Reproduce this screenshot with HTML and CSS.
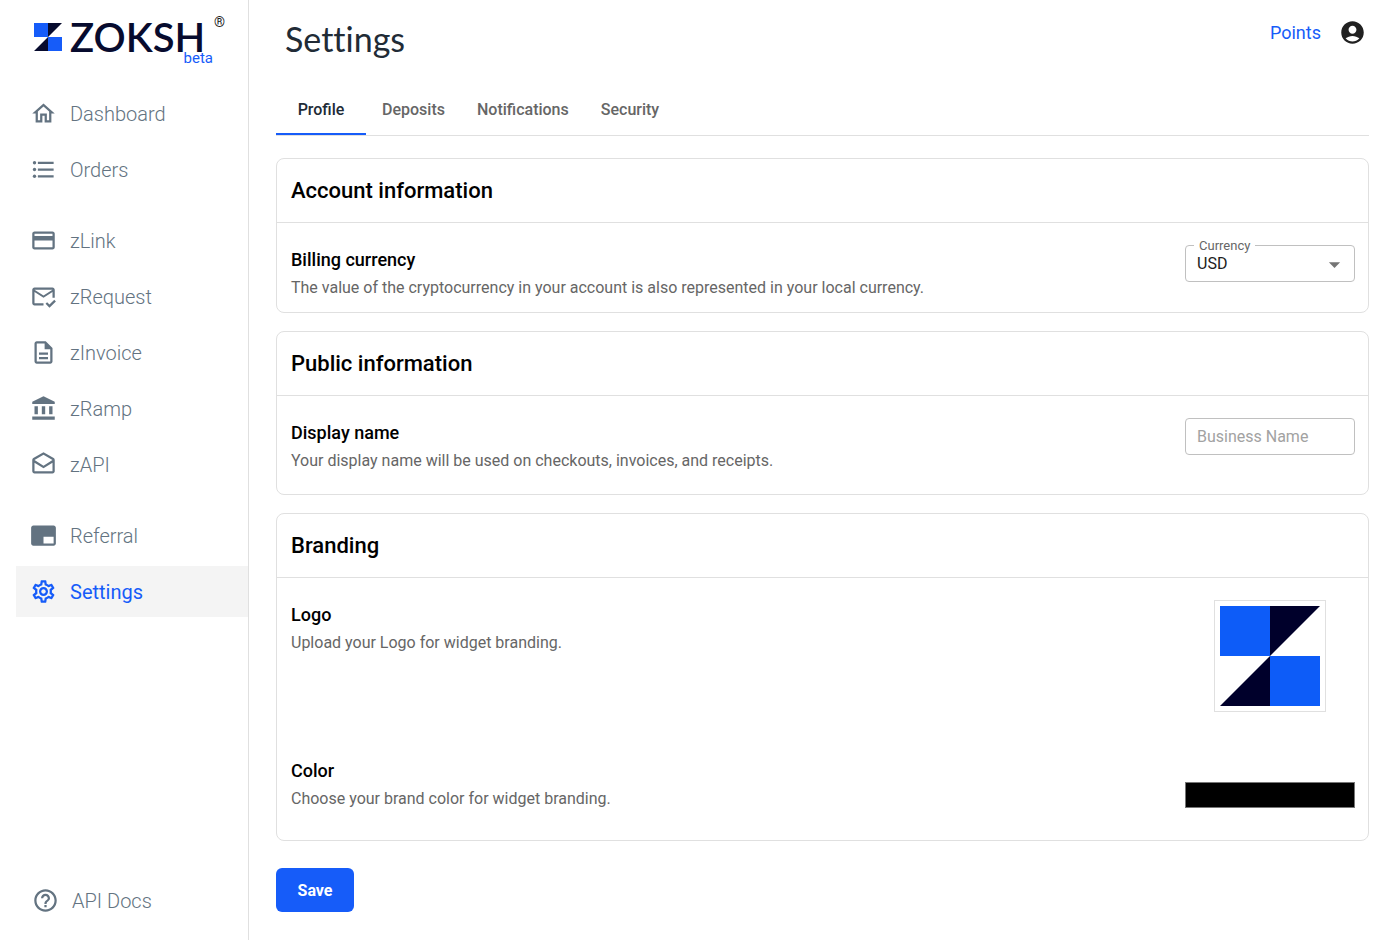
FILE: index.html
```html
<!DOCTYPE html>
<html lang="en">
<head>
<meta charset="utf-8">
<title>Zoksh Settings</title>
<link rel="stylesheet" href="styles.css">
</head>
<body>
<div class="app">
  <aside class="sidebar">
    <a class="brand" href="#">
      <svg class="brand-mark" viewBox="0 0 28 28" aria-hidden="true"><path fill="#165cf9" d="M0 0h14v14H0zM14 14h14v14H14z"/><path fill="#070b2e" d="M14 0h14L14 14zM14 28H0l14-14z"/></svg>
      <span class="brand-name">ZOKSH</span>
      <span class="brand-reg">®</span>
      <span class="brand-tag">beta</span>
    </a>
    <nav class="nav" aria-label="Main">
      <ul class="nav-group">
        <li><a class="nav-link" href="#"><svg class="icon" viewBox="0 0 24 24"><path d="M12 5.69l5 4.5V18h-2v-6H9v6H7v-7.81l5-4.5M12 3L2 12h3v8h6v-6h2v6h6v-8h3L12 3z"/></svg>Dashboard</a></li>
        <li><a class="nav-link" href="#"><svg class="icon" viewBox="0 0 24 24"><circle cx="4" cy="6" r="1.5"/><circle cx="4" cy="12" r="1.5"/><circle cx="4" cy="18" r="1.5"/><path d="M7 5h14v2H7zM7 11h14v2H7zM7 17h14v2H7z"/></svg>Orders</a></li>
      </ul>
      <ul class="nav-group">
        <li><a class="nav-link" href="#"><svg class="icon" viewBox="0 0 24 24"><path d="M20 4H4c-1.11 0-1.99.89-1.99 2L2 18c0 1.11.89 2 2 2h16c1.11 0 2-.89 2-2V6c0-1.11-.89-2-2-2zm0 14H4v-6h16v6zm0-10H4V6h16v2z"/></svg>zLink</a></li>
        <li><a class="nav-link" href="#"><svg class="icon" viewBox="0 0 24 24"><path d="M12 18H4V8l8 5 8-5v5h2V6c0-1.1-.9-2-2-2H4c-1.1 0-2 .9-2 2v12c0 1.1.9 2 2 2h8v-2zm8-12l-8 5-8-5h16zm-2.66 16l-3.54-3.54 1.41-1.41 2.12 2.12 4.24-4.24L23 16.34 17.34 22z"/></svg>zRequest</a></li>
        <li><a class="nav-link" href="#"><svg class="icon" viewBox="0 0 24 24"><path d="M8 16h8v2H8zm0-4h8v2H8zm6-10H6c-1.1 0-2 .9-2 2v16c0 1.1.89 2 1.99 2H18c1.1 0 2-.9 2-2V8l-6-6zm4 18H6V4h7v5h5v11z"/></svg>zInvoice</a></li>
        <li><a class="nav-link" href="#"><svg class="icon" viewBox="0 0 24 24"><path d="M4 10h3v7H4zM10.5 10h3v7h-3zM2 19h20v3H2zM17 10h3v7h-3zM12 1L2 6v2h20V6z"/></svg>zRamp</a></li>
        <li><a class="nav-link" href="#"><svg class="icon" viewBox="0 0 24 24"><path d="M21.99 8c0-.72-.37-1.35-.94-1.7L12 1 2.95 6.3C2.38 6.65 2 7.28 2 8v10c0 1.1.9 2 2 2h16c1.1 0 2-.9 2-2l-.01-10zm-2 0v.01L12 13 4 8l8-4.68L19.99 8zM4 18v-7.66l8 5.02 7.99-4.99L20 18H4z"/></svg>zAPI</a></li>
      </ul>
      <ul class="nav-group">
        <li><a class="nav-link" href="#"><svg class="icon" viewBox="0 0 24 24"><path d="M21 3H3c-1.1 0-2 .9-2 2v14c0 1.1.9 2 2 2h18c1.1 0 2-.9 2-2V5c0-1.1-.9-2-2-2zm0 16h-9v-6h9v6z"/></svg>Referral</a></li>
        <li><a class="nav-link nav-link-active" href="#" aria-current="page"><svg class="icon" viewBox="0 0 24 24"><path d="M19.43 12.98c.04-.32.07-.64.07-.98 0-.34-.03-.66-.07-.98l2.11-1.65c.19-.15.24-.42.12-.64l-2-3.46c-.09-.16-.26-.25-.44-.25-.06 0-.12.01-.17.03l-2.49 1c-.52-.4-1.08-.73-1.69-.98l-.38-2.65C14.46 2.18 14.25 2 14 2h-4c-.25 0-.46.18-.49.42l-.38 2.65c-.61.25-1.17.59-1.69.98l-2.49-1c-.06-.02-.12-.03-.18-.03-.17 0-.34.09-.43.25l-2 3.46c-.13.22-.07.49.12.64l2.11 1.65c-.04.32-.07.65-.07.98 0 .33.03.66.07.98l-2.11 1.65c-.19.15-.24.42-.12.64l2 3.46c.09.16.26.25.44.25.06 0 .12-.01.17-.03l2.49-1c.52.4 1.08.73 1.69.98l.38 2.65c.03.24.24.42.49.42h4c.25 0 .46-.18.49-.42l.38-2.65c.61-.25 1.17-.59 1.69-.98l2.49 1c.06.02.12.03.18.03.17 0 .34-.09.43-.25l2-3.46c.12-.22.07-.49-.12-.64l-2.11-1.65zm-1.98-1.71c.04.31.05.52.05.73 0 .21-.02.43-.05.73l-.14 1.13.89.7 1.08.84-.7 1.21-1.27-.51-1.04-.42-.9.68c-.43.32-.84.56-1.25.73l-1.06.43-.16 1.13-.2 1.35h-1.4l-.19-1.35-.16-1.13-1.06-.43c-.43-.18-.83-.41-1.23-.71l-.91-.7-1.06.43-1.27.51-.7-1.21 1.08-.84.89-.7-.14-1.13c-.03-.31-.05-.54-.05-.74s.02-.43.05-.73l.14-1.13-.89-.7-1.08-.84.7-1.21 1.27.51 1.04.42.9-.68c.43-.32.84-.56 1.25-.73l1.06-.43.16-1.13.2-1.35h1.39l.19 1.35.16 1.13 1.06.43c.43.18.83.41 1.23.71l.91.7 1.06-.43 1.27-.51.7 1.21-1.07.85-.89.7.14 1.13zM12 8c-2.21 0-4 1.79-4 4s1.79 4 4 4 4-1.79 4-4-1.79-4-4-4zm0 6c-1.1 0-2-.9-2-2s.9-2 2-2 2 .9 2 2-.9 2-2 2z"/></svg>Settings</a></li>
      </ul>
    </nav>
    <a class="nav-link nav-link-docs" href="#"><svg class="icon" viewBox="0 0 24 24"><path d="M11 18h2v-2h-2v2zm1-16C6.48 2 2 6.48 2 12s4.48 10 10 10 10-4.48 10-10S17.52 2 12 2zm0 18c-4.41 0-8-3.59-8-8s3.59-8 8-8 8 3.59 8 8-3.59 8-8 8zm0-14c-2.21 0-4 1.79-4 4h2c0-1.1.9-2 2-2s2 .9 2 2c0 2-3 1.75-3 5h2c0-2.25 3-2.5 3-5 0-2.21-1.79-4-4-4z"/></svg>API Docs</a>
  </aside>

  <main class="main">
    <header class="topbar">
      <h1 class="page-title">Settings</h1>
      <div class="topbar-actions">
        <a class="points" href="#">Points</a>
        <button class="account" type="button" aria-label="Account"><svg class="icon" viewBox="0 0 24 24"><path d="M12 2C6.48 2 2 6.48 2 12s4.48 10 10 10 10-4.48 10-10S17.52 2 12 2zm0 4c1.93 0 3.5 1.57 3.5 3.5S13.93 13 12 13s-3.5-1.57-3.5-3.5S10.07 6 12 6zm0 14c-2.03 0-4.43-.82-6.14-2.88C7.55 15.8 9.68 15 12 15s4.45.8 6.14 2.12C16.43 19.18 14.03 20 12 20z"/></svg></button>
      </div>
    </header>

    <div class="tabs" role="tablist">
      <button class="tab tab-active" type="button" role="tab" aria-selected="true">Profile</button>
      <button class="tab" type="button" role="tab" aria-selected="false">Deposits</button>
      <button class="tab" type="button" role="tab" aria-selected="false">Notifications</button>
      <button class="tab" type="button" role="tab" aria-selected="false">Security</button>
    </div>

    <form class="form">
      <section class="card">
        <h2 class="card-title">Account information</h2>
        <div class="row row-compact">
          <div class="row-text">
            <h3 class="row-title">Billing currency</h3>
            <p class="row-desc">The value of the cryptocurrency in your account is also represented in your local currency.</p>
          </div>
          <div class="control select-field">
            <label class="select-label" for="currency">Currency</label>
            <select class="field select" id="currency"><option>USD</option></select>
            <svg class="select-arrow" viewBox="0 0 24 24" aria-hidden="true"><path d="M7 10l5 5 5-5z"/></svg>
          </div>
        </div>
      </section>

      <section class="card">
        <h2 class="card-title">Public information</h2>
        <div class="row">
          <div class="row-text">
            <h3 class="row-title"><label for="display-name">Display name</label></h3>
            <p class="row-desc">Your display name will be used on checkouts, invoices, and receipts.</p>
          </div>
          <div class="control">
            <input class="field" id="display-name" type="text" placeholder="Business Name">
          </div>
        </div>
      </section>

      <section class="card">
        <h2 class="card-title">Branding</h2>
        <div class="row row-logo">
          <div class="row-text">
            <h3 class="row-title">Logo</h3>
            <p class="row-desc">Upload your Logo for widget branding.</p>
          </div>
          <div class="control control-center">
            <button class="logo-upload" type="button" aria-label="Upload logo">
              <svg class="logo-image" viewBox="0 0 100 100"><path fill="#00002b" d="M50 0h50L50 50zM50 100H0l50-50z"/><path fill="#0d5cf8" d="M0 0h50v50H0zM50 50h50v50H50z"/></svg>
            </button>
          </div>
        </div>
        <div class="row row-color">
          <div class="row-text">
            <h3 class="row-title"><label for="brand-color">Color</label></h3>
            <p class="row-desc">Choose your brand color for widget branding.</p>
          </div>
          <div class="control">
            <input class="color-input" id="brand-color" type="color" value="#000000">
          </div>
        </div>
      </section>

      <button class="save" type="submit">Save</button>
    </form>
  </main>
</div>
</body>
</html>
```

FILE: styles.css
```css
* {
  box-sizing: border-box;
}

body {
  margin: 0;
  background: #fff;
  color: #000;
  font-family: Roboto, sans-serif;
  font-size: 16px;
}

h1, h2, h3, p, ul {
  margin: 0;
  padding: 0;
}

button, input, select {
  font: inherit;
}

a {
  text-decoration: none;
}

.app {
  display: flex;
  min-height: 100vh;
}

.icon {
  display: block;
  flex: none;
  width: 27px;
  height: 27px;
  fill: currentColor;
}

/* Sidebar */
.sidebar {
  display: flex;
  flex-direction: column;
  flex: none;
  width: 249px;
  padding: 12px 0 12px 16px;
  border-right: 1px solid #e0e0e0;
}

.brand {
  position: relative;
  display: flex;
  align-items: center;
  align-self: flex-start;
  gap: 8px;
  width: 209px;
  height: 50px;
  padding-left: 18px;
}

.brand-mark {
  width: 28px;
  height: 28px;
}

.brand-name {
  color: #070b2e;
  font-family: Lato, sans-serif;
  font-size: 40px;
  font-weight: 600;
  line-height: 28px;
}

.brand-reg {
  position: absolute;
  top: 0;
  right: 0;
  color: #222;
  font-size: 14px;
  line-height: 20px;
}

.brand-tag {
  position: absolute;
  right: 12px;
  bottom: -4px;
  color: #165cf9;
  font-size: 15px;
  line-height: 16px;
}

.nav {
  display: flex;
  flex-direction: column;
  flex: 1;
  gap: 20px;
  padding-top: 26px;
}

.nav-group {
  display: flex;
  flex-direction: column;
  gap: 5px;
  list-style: none;
}

.nav-link {
  display: flex;
  align-items: center;
  gap: 13px;
  height: 51px;
  padding-left: 14px;
  color: #637381;
  font-size: 20px;
  font-weight: 300;
}

.nav-link-active {
  background: #f4f4f4;
  color: #165cf9;
  font-weight: 400;
}

.nav-link-docs {
  padding-left: 16px;
}

/* Main column */
.main {
  flex: 1;
  min-width: 0;
  padding: 16px 27px 24px;
}

.topbar {
  display: flex;
  align-items: flex-start;
  justify-content: space-between;
  padding: 0 3px 0 9px;
}

.page-title {
  color: #212b36;
  font-family: Lato, sans-serif;
  font-size: 34px;
  font-weight: 400;
  font-variant-ligatures: none;
  line-height: 46px;
}

.topbar-actions {
  display: flex;
  align-items: center;
  gap: 18px;
  height: 33px;
}

.points {
  color: #165cf9;
  font-size: 18px;
  line-height: 24px;
}

.account {
  padding: 0;
  border: 0;
  background: none;
  color: #212121;
}

.tabs {
  display: flex;
  margin-top: 23px;
  border-bottom: 1px solid #e0e0e0;
}

.tab {
  min-width: 90px;
  height: 50px;
  padding: 0 16px;
  border: 0;
  border-bottom: 2px solid transparent;
  background: none;
  color: #666;
  font-weight: 500;
}

.tab-active {
  border-color: #165cf9;
  color: #212b36;
}

/* Cards */
.form {
  display: flex;
  flex-direction: column;
  gap: 18px;
  padding-top: 22px;
}

.card {
  border: 1px solid #e0e0e0;
  border-radius: 8px;
}

.card-title {
  padding: 0 14px;
  border-bottom: 1px solid #e0e0e0;
  font-size: 22px;
  font-weight: 500;
  line-height: 63px;
}

.row {
  display: flex;
  align-items: flex-start;
  justify-content: space-between;
  gap: 24px;
  padding: 22px 13px 20px 14px;
}

.row-compact {
  padding-bottom: 11px;
}

.row-logo {
  padding-bottom: 22px;
}

.row-color {
  padding-bottom: 28px;
}

.row-title {
  font-size: 18px;
  font-weight: 500;
  line-height: 30px;
}

.row-desc {
  color: #666;
  line-height: 26px;
}

.control {
  flex: none;
  width: 170px;
}

.control-center {
  display: flex;
  justify-content: center;
}

.field {
  display: block;
  width: 100%;
  height: 37px;
  padding: 0 11px;
  border: 1px solid #c0c0c0;
  border-radius: 4px;
  background: #fff;
  color: #212121;
}

.field::placeholder {
  color: #a2a2a2;
}

.select-field {
  position: relative;
}

.select {
  appearance: none;
}

.select-label {
  position: absolute;
  top: -7px;
  left: 9px;
  padding: 0 5px;
  background: #fff;
  color: #666;
  font-size: 13px;
  line-height: 16px;
}

.select-arrow {
  position: absolute;
  top: 6px;
  right: 7px;
  width: 27px;
  height: 27px;
  fill: #757575;
  pointer-events: none;
}

.logo-upload {
  padding: 5px;
  border: 1px solid #e0e0e0;
  background: #fff;
}

.logo-image {
  display: block;
  width: 100px;
  height: 100px;
}

.color-input {
  appearance: none;
  display: block;
  width: 100%;
  height: 26px;
  margin: 26px 0 0;
  padding: 0;
  border: 1px solid #767676;
  background: #000;
}

.color-input::-webkit-color-swatch-wrapper {
  padding: 0;
}

.color-input::-webkit-color-swatch {
  border: 0;
}

.save {
  align-self: flex-start;
  width: 78px;
  height: 44px;
  margin-top: 9px;
  border: 0;
  border-radius: 6px;
  background: #165cf9;
  color: #fff;
  font-weight: 700;
}

.sidebar .nav-link-docs {
  margin-bottom: 2px;
}
```
